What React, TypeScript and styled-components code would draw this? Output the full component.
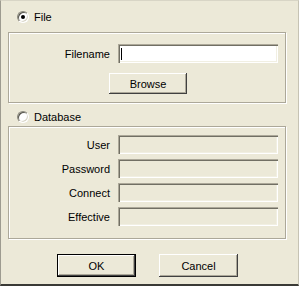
import React from 'react';
import styled, { createGlobalStyle } from 'styled-components';

const GlobalStyle = createGlobalStyle`
  html, body {
    margin: 0;
    padding: 0;
    background: #ece9d8;
  }
  body {
    font-family: 'Liberation Sans', Arial, sans-serif;
    font-size: 11px;
    color: #000;
  }
`;

const fields = ['User', 'Password', 'Connect', 'Effective'];

const App = () => {
  return (
    <>
      <GlobalStyle />
      <Dialog>
        <RadioRow>
          <RadioCircle checked />
          <span>File</span>
        </RadioRow>

        <GroupBox height={71}>
          <FileBody>
            <FieldRow>
              <FieldLabel>Filename</FieldLabel>
              <TextBoxWrap>
                <TextBox type='text' defaultValue='' />
                <Caret />
              </TextBoxWrap>
            </FieldRow>
            <BrowseButton>Browse</BrowseButton>
          </FileBody>
        </GroupBox>

        <RadioRow top={8}>
          <RadioCircle />
          <span>Database</span>
        </RadioRow>

        <GroupBox height={113} top={3}>
          <DbBody>
            {fields.map((f) => (
              <FieldRow key={f}>
                <FieldLabel>{f}</FieldLabel>
                <TextBox type='text' disabled muted />
              </FieldRow>
            ))}
          </DbBody>
        </GroupBox>

        <ButtonBar>
          <DialogButton isDefault>OK</DialogButton>
          <DialogButton>Cancel</DialogButton>
        </ButtonBar>
      </Dialog>
    </>
  );
};
export default App;

const Dialog = styled.div`
  width: 299px;
  height: 286px;
  box-sizing: border-box;
  border-left: 1px solid #9d9b90;
  border-top: 1px solid #d8d5c6;
  border-right: 1px solid #c6c3b4;
  border-bottom: 2px solid #3a3a36;
  display: flex;
  flex-direction: column;
`;

const RadioRow = styled.div<{ top?: number }>`
  display: flex;
  align-items: center;
  gap: 5px;
  height: 12px;
  margin-top: ${({ top = 10 }) => top}px;
  padding-left: 16px;
  line-height: 12px;
`;

const RadioCircle = styled.span<{ checked?: boolean }>`
  position: relative;
  width: 12px;
  height: 12px;
  box-sizing: border-box;
  border-radius: 50%;
  border: 1px solid;
  border-color: #8a887c #ffffff #ffffff #8a887c;
  background: #fff;
  box-shadow: inset 1px 1px 0 #55544c, inset -1px -1px 0 #d8d5c6;

  &::after {
    content: '';
    display: ${({ checked }) => (checked ? 'block' : 'none')};
    position: absolute;
    left: 3px;
    top: 3px;
    width: 4px;
    height: 4px;
    border-radius: 50%;
    background: #000;
  }
`;

const GroupBox = styled.div<{ height: number; top?: number }>`
  width: 278px;
  height: ${({ height }) => height}px;
  box-sizing: border-box;
  margin-top: ${({ top = 9 }) => top}px;
  margin-left: 7px;
  border: 1px solid #aca899;
  box-shadow: inset 1px 1px 0 #fff, 1px 1px 0 #fff;
`;

const FileBody = styled.div`
  display: flex;
  flex-direction: column;
  gap: 10px;
  padding-top: 11px;
`;

const DbBody = styled.div`
  display: flex;
  flex-direction: column;
  gap: 5px;
  padding-top: 8px;
`;

const FieldRow = styled.div`
  display: flex;
  align-items: center;
  gap: 8px;
  height: 19px;
`;

const FieldLabel = styled.span`
  width: 101px;
  text-align: right;
`;

const TextBoxWrap = styled.div`
  position: relative;
  display: flex;
`;

const TextBox = styled.input<{ muted?: boolean }>`
  width: 160px;
  height: 19px;
  box-sizing: border-box;
  margin: 0;
  padding: 0 3px;
  border: none;
  outline: none;
  font: inherit;
  background: ${({ muted }) => (muted ? '#ece9d8' : '#fff')};
  box-shadow: inset 1px 1px 0 #aca899, inset 2px 2px 0 #716f64,
    inset -1px -1px 0 #fff, inset -2px -2px 0 #f1efe2;
`;

const Caret = styled.span`
  position: absolute;
  left: 3px;
  top: 4px;
  width: 1px;
  height: 12px;
  background: #000;
`;

const ButtonBase = styled.button`
  height: 21px;
  box-sizing: border-box;
  margin: 0;
  padding: 0;
  border: none;
  font: inherit;
  color: #000;
  background: #ece9d8;
  box-shadow: inset -1px -1px 0 #404040, inset 1px 1px 0 #fff,
    inset -2px -2px 0 #aca899;
`;

const BrowseButton = styled(ButtonBase)`
  width: 78px;
  margin-left: 100px;
`;

const ButtonBar = styled.div`
  display: flex;
  gap: 23px;
  margin-top: 15px;
  padding-left: 56px;
`;

const DialogButton = styled(ButtonBase)<{ isDefault?: boolean }>`
  width: 79px;
  height: 23px;
  border: 1px solid ${({ isDefault }) => (isDefault ? '#000' : 'transparent')};
  ${({ isDefault }) =>
    isDefault
      ? ''
      : `border: none;
         box-shadow: inset -1px -1px 0 #404040, inset 1px 1px 0 #fff,
           inset -2px -2px 0 #aca899;`}
`;
